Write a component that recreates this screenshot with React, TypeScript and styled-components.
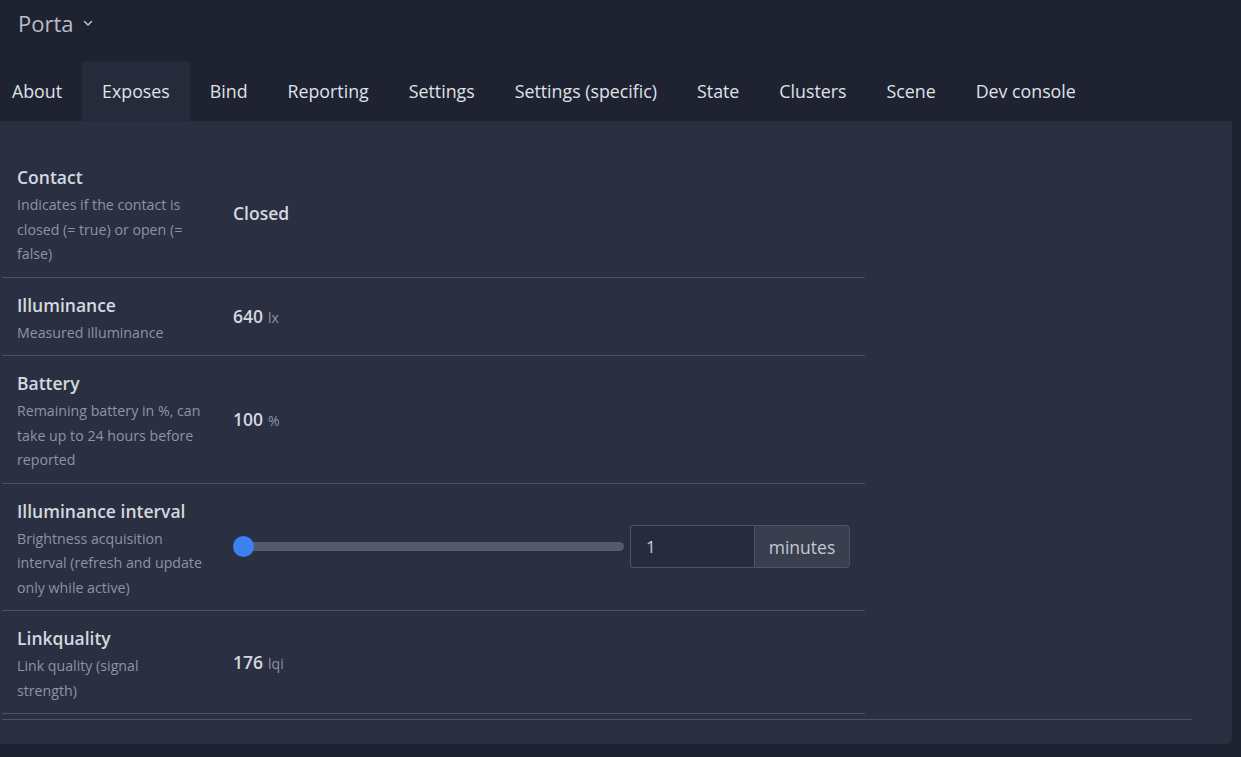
import React, { FC } from "react";
import styled, { createGlobalStyle } from "styled-components";

const GlobalStyle = createGlobalStyle`
  html, body {
    margin: 0;
    padding: 0;
    background: #1f2331;
  }
  body {
    font-family: "Open Sans", "Noto Sans", sans-serif;
    overflow: hidden;
  }
`;

const Page = styled.div`
  width: 1241px;
  height: 757px;
  background: #1f2331;
  color: #d6d9e0;
  overflow: hidden;
`;

const Header = styled.div`
  height: 61px;
  display: flex;
  align-items: flex-start;
  padding-left: 18px;
  box-sizing: border-box;
`;

const DeviceName = styled.div`
  display: flex;
  align-items: center;
  gap: 8px;
  margin-top: 8px;
  font-size: 22px;
  line-height: 30px;
  color: #b9bdc8;
`;

const TabList = styled.div`
  display: flex;
  height: 60px;
  margin-left: -8px;
`;

const Tab = styled.div<{ active?: boolean }>`
  padding: 0 20px;
  line-height: 60px;
  font-size: 17.8px;
  color: #dfe2e8;
  background: ${(p) => (p.active ? "#262b3c" : "transparent")};
  border-radius: 4px 4px 0 0;
  white-space: nowrap;
`;

const Panel = styled.div`
  width: 1232px;
  height: 623px;
  background: #2a2f42;
  border-radius: 0 0 6px 0;
  padding: 29px 40px 0 2px;
  box-sizing: border-box;
`;

const TableWrap = styled.div`
  border-bottom: 1px solid #4b5162;
  padding-bottom: 5px;
`;

const Table = styled.div`
  width: 863px;
`;

const Row = styled.div`
  display: grid;
  grid-template-columns: 216px 1fr;
  border-bottom: 1px solid #4b5162;
`;

const NameCell = styled.div`
  padding: 16px 12px 10px 15px;
`;

const Title = styled.div`
  font-size: 17.5px;
  line-height: 22px;
  font-weight: 600;
  color: #d5d8df;
  margin-bottom: 5px;
`;

const Desc = styled.div`
  font-size: 14.2px;
  line-height: 24.5px;
  color: #8e94a3;
  white-space: pre-line;
`;

const ValueCell = styled.div`
  padding: 0 15px;
  display: flex;
  align-items: center;
`;

const Value = styled.span`
  font-size: 17.5px;
  font-weight: 600;
  color: #d5d8df;
`;

const Unit = styled.span`
  font-size: 14px;
  color: #8d93a2;
  margin-left: 5px;
`;

const SliderBox = styled.div`
  flex: 1;
  display: flex;
  align-items: center;
  gap: 6px;
`;

const Track = styled.div`
  position: relative;
  flex: 1;
  height: 9px;
  border-radius: 5px;
  background: #555b6b;
  margin-left: 10px;
`;

const Knob = styled.div`
  position: absolute;
  left: -10px;
  top: -6px;
  width: 21px;
  height: 21px;
  border-radius: 50%;
  background: #3b82f0;
`;

const InputGroup = styled.div`
  display: flex;
  height: 43px;
`;

const NumberInput = styled.div`
  width: 124px;
  box-sizing: border-box;
  border: 1px solid #4e5466;
  border-right: none;
  border-radius: 3px 0 0 3px;
  background: #272b3d;
  padding-left: 15px;
  display: flex;
  align-items: center;
  font-size: 17px;
  color: #c9cdd8;
`;

const Addon = styled.div`
  width: 96px;
  box-sizing: border-box;
  border: 1px solid #4e5466;
  border-radius: 0 4px 4px 0;
  background: #3a3f50;
  display: flex;
  align-items: center;
  justify-content: center;
  font-size: 17.5px;
  color: #c3c7d2;
`;

const tabs = [
  "About",
  "Exposes",
  "Bind",
  "Reporting",
  "Settings",
  "Settings (specific)",
  "State",
  "Clusters",
  "Scene",
  "Dev console",
];

type Feature = {
  title: string;
  desc: string;
  value?: string;
  unit?: string;
  slider?: boolean;
};

const features: Feature[] = [
  { title: "Contact", desc: "Indicates if the contact is closed (= true) or open (= false)", value: "Closed" },
  { title: "Illuminance", desc: "Measured illuminance", value: "640", unit: "lx" },
  { title: "Battery", desc: "Remaining battery in %, can take up to 24 hours before reported", value: "100", unit: "%" },
  { title: "Illuminance interval", desc: "Brightness acquisition interval (refresh and update only while active)", slider: true },
  { title: "Linkquality", desc: "Link quality (signal\nstrength)", value: "176", unit: "lqi" },
];

const Chevron: FC = () => (
  <svg width="12" height="12" viewBox="0 0 12 12" fill="none">
    <path d="M2.5 4.5 L6 8 L9.5 4.5" stroke="#b9bdc8" strokeWidth="1.6" strokeLinecap="round" strokeLinejoin="round" />
  </svg>
);

const App: FC = () => {
  return (
    <Page>
      <GlobalStyle />
      <Header>
        <DeviceName>
          Porta <Chevron />
        </DeviceName>
      </Header>
      <TabList>
        {tabs.map((t) => (
          <Tab key={t} active={t === "Exposes"}>
            {t}
          </Tab>
        ))}
      </TabList>
      <Panel>
        <TableWrap>
          <Table>
            {features.map((f) => (
              <Row key={f.title}>
                <NameCell>
                  <Title>{f.title}</Title>
                  <Desc>{f.desc}</Desc>
                </NameCell>
                <ValueCell>
                  {f.slider ? (
                    <SliderBox>
                      <Track>
                        <Knob />
                      </Track>
                      <InputGroup>
                        <NumberInput>1</NumberInput>
                        <Addon>minutes</Addon>
                      </InputGroup>
                    </SliderBox>
                  ) : (
                    <div>
                      <Value>{f.value}</Value>
                      {f.unit && <Unit>{f.unit}</Unit>}
                    </div>
                  )}
                </ValueCell>
              </Row>
            ))}
          </Table>
        </TableWrap>
      </Panel>
    </Page>
  );
};

export default App;
